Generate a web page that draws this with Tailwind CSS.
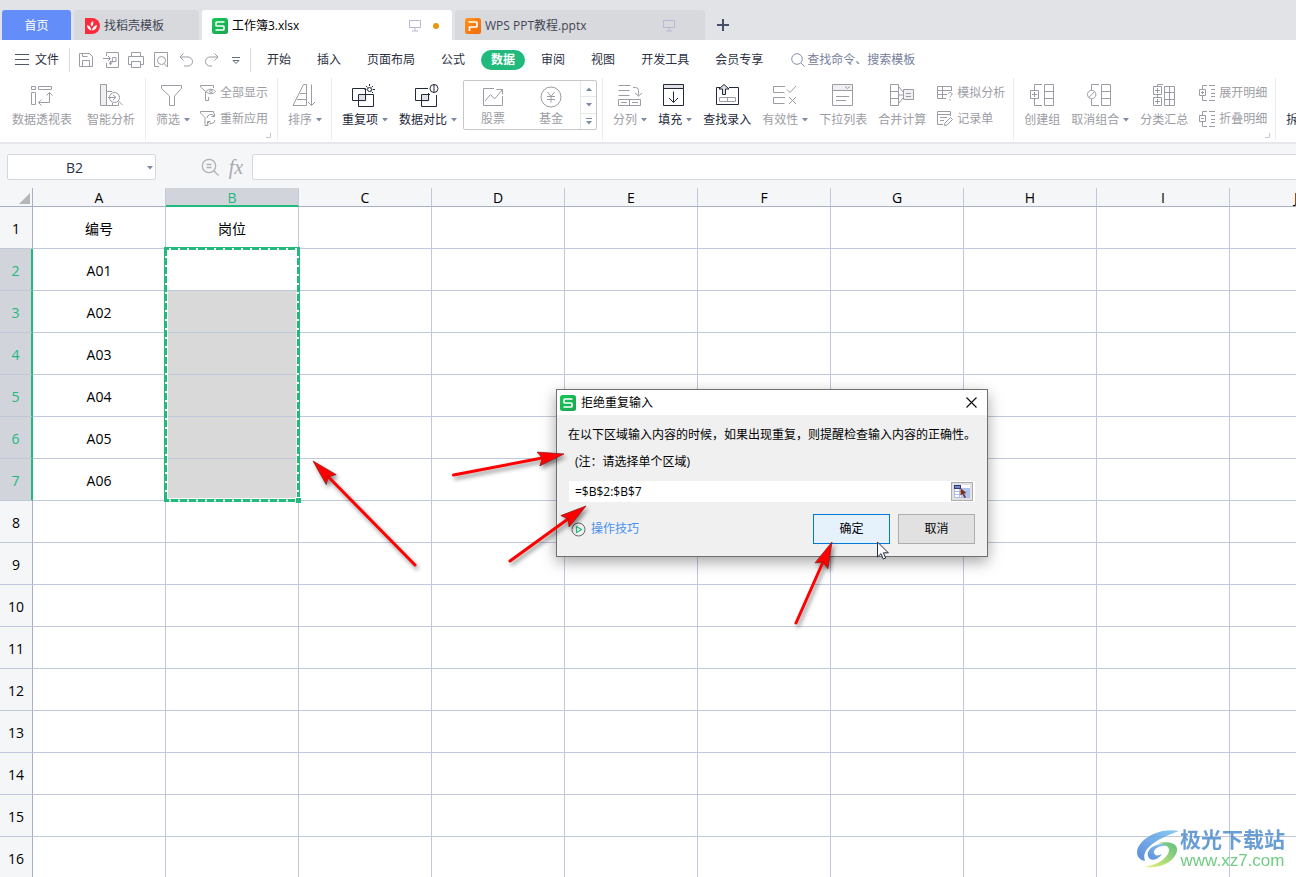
<!DOCTYPE html>
<html lang="zh-CN">
<head>
<meta charset="utf-8">
<title>工作簿3.xlsx</title>
<script src="https://cdn.jsdelivr.net/npm/@tailwindcss/browser@4"></script>
</head>
<body class="relative flex h-screen flex-col overflow-hidden bg-white font-['Open_Sans','Noto_Sans_CJK_SC',sans-serif] text-xs text-[#2b3042]">

<svg class="absolute size-0" aria-hidden="true">
  <defs>
    <linearGradient id="gGreen" x1="0" y1="0" x2="1" y2="1"><stop offset="0" stop-color="#12c957"/><stop offset="1" stop-color="#1da552"/></linearGradient>
    <linearGradient id="gOrange" x1="0" y1="0" x2="1" y2="1"><stop offset="0" stop-color="#ff9318"/><stop offset="1" stop-color="#ee6a0c"/></linearGradient>
    <symbol id="sheetLogo" viewBox="0 0 16 16"><rect width="16" height="16" rx="2.5" fill="url(#gGreen)"/><path d="M12.500 4H5a1 1 0 0 0-1 1v2a1 1 0 0 0 1 1h6a1 1 0 0 1 1 1v2a1 1 0 0 1-1 1H3.500" fill="none" stroke="#fff" stroke-width="1.700"/></symbol>
    <symbol id="pptLogo" viewBox="0 0 16 16"><rect width="16" height="16" rx="2.5" fill="url(#gOrange)"/><path d="M3.500 4H11a1 1 0 0 1 1 1v3a1 1 0 0 1-1 1H4.500v4" fill="none" stroke="#fff" stroke-width="1.700"/></symbol>
    <symbol id="screen" viewBox="0 0 12 12"><path d="M.5.5h11v7H.5zM6 8v3M3 11h6" fill="none" stroke="#b6b9d2"/></symbol>
    <symbol id="caret" viewBox="0 0 6 4"><path d="M0 0h6L3 3.500z" fill="#7f8aa5"/></symbol>
  </defs>
</svg>

<header class="flex h-10 shrink-0 items-end bg-[#e1e3e7] pl-[2px]">
  <button class="h-[30px] w-[69px] rounded-t-[3px] bg-[#638efa] pt-[2px] text-white">首页</button>
  <button class="ml-[3px] flex h-[30px] w-[125px] items-center gap-[4px] rounded-t-[3px] bg-[#d8d9dd] pt-[2px] pl-[10px] text-[#404654]">
    <svg class="size-4" viewBox="0 0 16 16"><path d="M1 0h7a8 8 0 0 1 0 16H1z" fill="#fb2b3c"/><path d="M7.500 12.500C4.500 12 3 10 3 7c2.500.5 4 2.500 4.500 5.500zM7.500 8.500C6 6.500 6.500 4.500 9 3c.8 2.500.3 4.500-1.500 5.500zM8 12.500c.3-3 2-4.800 5-5.500 0 3-1.800 5.200-5 5.500z" fill="#fff"/></svg>
    <span>找稻壳模板</span>
  </button>
  <button class="ml-[3px] flex h-[30px] w-[250px] items-center rounded-t-[3px] bg-white px-[10px] pt-[2px] text-black">
    <svg class="size-4"><use href="#sheetLogo"/></svg>
    <span class="ml-[4px] flex-1 text-left">工作簿3.xlsx</span>
    <svg class="size-3"><use href="#screen"/></svg>
    <span class="mr-[3px] ml-[12px] size-[6px] rounded-full bg-[#e5980d]"></span>
  </button>
  <button class="ml-[3px] flex h-[30px] w-[250px] items-center rounded-t-[3px] bg-[#d8d9dd] px-[10px] pt-[2px] text-[#404654]">
    <svg class="size-4"><use href="#pptLogo"/></svg>
    <span class="ml-[4px] flex-1 text-left">WPS PPT教程.pptx</span>
    <svg class="mr-[20px] size-3"><use href="#screen"/></svg>
  </button>
  <button class="flex h-[30px] w-9 items-center justify-center" aria-label="新建"><svg class="size-3" viewBox="0 0 12 12"><path d="M6 0v12M0 6h12" stroke="#44506b" stroke-width="2"/></svg></button>
</header>

<nav class="flex h-[38px] shrink-0 items-center pt-[2px] pl-[15px]">
  <button class="flex items-center gap-[6px]"><svg class="h-3 w-[14px]" viewBox="0 0 14 12"><path d="M0 .5h14M0 5.500h14M0 10.500h14" stroke="#50566a"/></svg><span class="text-[#2b3042]">文件</span></button>
  <div class="ml-[10px] h-6 w-px bg-[#dcdce0]"></div>
  <div class="flex items-center gap-[9px] pl-[8px] [&_svg]:size-4 [&_svg]:fill-none [&_svg]:stroke-[#9a9da3]">
    <button aria-label="保存"><svg viewBox="0 0 16 16"><path d="M1.500 1.500h10l3 3v10h-13zM4.500 14V8.500h7V14M4.500 1.500v3h5"/></svg></button>
    <button aria-label="输出为PDF"><svg viewBox="0 0 16 16"><path d="M3.500 4V.5h12v15h-12V11M0 6.500h7M5 4l2.500 2.500L5 9M7.500 12.500V9M9.500 5.500h3.500v4h-4c-3 0-3 3-1.500 3s2-4 2-7"/></svg></button>
    <button aria-label="打印"><svg viewBox="0 0 16 16"><path d="M3.500 4.500v-4h9v4M3.500 12.500h-3v-8h15v8h-3M3.500 9.500h9v6h-9z"/></svg></button>
    <button aria-label="打印预览"><svg viewBox="0 0 16 16"><path d="M6 14.500H1.500V.5h13V15M11.500 12l3 3"/><circle cx="8.500" cy="8.500" r="4"/></svg></button>
    <button aria-label="撤消"><svg viewBox="0 0 16 16"><path d="M5.500 1.500 2 5l3.500 3.500M2 5h8a4.500 4.500 0 0 1 0 9H6"/></svg></button>
    <button aria-label="恢复"><svg viewBox="0 0 16 16"><path d="m11.500 1.500 3.500 3.500-3.500 3.500M15 5H7a4.500 4.500 0 0 0 0 9h2"/></svg></button>
    <button aria-label="更多"><svg viewBox="0 0 16 16"><path d="M4 5.500h8M5 8.500h6l-3 3z" stroke="#666c7c"/></svg></button>
  </div>
  <div class="ml-[6px] h-6 w-px bg-[#dcdce0]"></div>
  <div class="ml-[3px] flex items-center [&>button]:px-[13px]">
    <button>开始</button><button>插入</button><button>页面布局</button><button>公式</button>
    <button><span class="-mx-[10px] block h-5 rounded-full bg-[#21ba7c] px-[10px] leading-5 font-semibold text-white">数据</span></button>
    <button>审阅</button><button>视图</button><button>开发工具</button><button>会员专享</button>
  </div>
  <label class="ml-[15px] flex flex-1 items-center gap-[2px]">
    <svg class="size-[14px] shrink-0" viewBox="0 0 14 14" fill="none" stroke="#8790ad"><circle cx="6" cy="6" r="5.300"/><path d="m10 10 3.500 3.500"/></svg>
    <input class="w-40 outline-none placeholder:text-[#77809c]" placeholder="查找命令、搜索模板" aria-label="查找命令">
  </label>
</nav>

<section class="flex h-[64px] shrink-0 overflow-hidden whitespace-nowrap text-[#9c9da4] [&_button]:shrink-0 [&_svg]:fill-none [&_svg]:stroke-current">
  <div class="flex shrink-0 gap-[15px] pr-[10px] pl-[12px]">
    <button class="flex flex-col items-center gap-[4px] pt-[6px]"><svg class="size-6" viewBox="0 0 24 24"><path d="M1.500 2.500h4v3h-4zM8.500 2.500h13v3h-13zM1.500 8.500h4v12h-4zM8.500 18.500h11v-10M11.500 15.500l-3 3 3 3M16.500 11.500l3-3 3 3"/></svg><span class="leading-4">数据透视表</span></button>
    <button class="flex flex-col items-center gap-[4px] pt-[6px]"><svg class="size-6" viewBox="0 0 24 24"><path d="M1.500.5h6v21h-6z" fill="#f0f0f2"/><path d="M7.500 7.500H13M7.500 21.500h12v-3M13.500 21.500V19M9 13.500h7M14 11l3 2.500-3 2.500M19.500 17l4 4"/><circle cx="15.500" cy="13.500" r="5"/></svg><span class="leading-4">智能分析</span></button>
  </div>
  <div class="h-[62px] w-px shrink-0 bg-[#ececee]"></div>
  <div class="relative flex shrink-0 gap-[10px] pr-[9px] pl-[10px]">
    <button class="flex flex-col items-center gap-[4px] pt-[6px]"><svg class="mr-[2px] size-6" viewBox="0 0 24 24"><path d="M1.500 1.500h20v3l-7 7.500v9.500h-5V12l-8-7.500z"/></svg><span class="flex items-center gap-[4px] leading-4">筛选<svg class="h-1 w-[6px] stroke-none!"><use href="#caret"/></svg></span></button>
    <div class="flex flex-col gap-[10px] pt-[7px]">
      <button class="flex items-center gap-[4px] leading-4"><svg class="size-4" viewBox="0 0 16 16"><path d="M5.500 15.500h3V12M5.500 15.500V6.500L.5 2V.5h13V3"/><path d="M6 6.500c2.500-3 7-3 9.500 0-2.500 3-7 3-9.500 0z"/><circle cx="10.800" cy="6.500" r="1.300"/></svg>全部显示</button>
      <button class="flex items-center gap-[4px] leading-4"><svg class="size-4" viewBox="0 0 16 16"><path d="M13.500 2.500v-2H.5V2L5 6.500v8h3V13M7 7a4 4 0 0 1 7.500-1.500M14.500 2.500v3h-3M15 9a4 4 0 0 1-7.500 1.500M7.500 13.500v-3h3"/></svg>重新应用</button>
    </div>
    <svg class="absolute right-[6px] bottom-1 size-[5px]" viewBox="0 0 5 5"><path d="M4.500 0v4.500H0" stroke="#c4c8d4"/></svg>
  </div>
  <div class="h-[62px] w-px shrink-0 bg-[#ececee]"></div>
  <div class="flex shrink-0 pr-[9px] pl-[10px]">
    <button class="flex flex-col items-center gap-[4px] pt-[6px]"><svg class="mr-[2px] size-6" viewBox="0 0 24 24"><path d="M1 21.500h13.500V.5H11.500zM8 9.500h6M5 15.500h9.500M19.500.5v21M16 18l3.500 3.500L23 18"/></svg><span class="flex items-center gap-[4px] leading-4">排序<svg class="h-1 w-[6px] stroke-none!"><use href="#caret"/></svg></span></button>
  </div>
  <div class="h-[62px] w-px shrink-0 bg-[#ececee]"></div>
  <div class="flex shrink-0 gap-[11px] pr-[5px] pl-[10px]">
    <button class="flex flex-col items-center gap-[4px] pt-[6px] text-[#23283a]"><svg class="mr-[2px] size-6" viewBox="0 0 24 24"><path d="M6.500 10.500h8v7h-8z" fill="#dfe1e6" stroke="none"/><path d="M.5 4.500h13v12H.5zM6.500 10.500h15v12h-15z"/><circle cx="17.500" cy="5.500" r="2"/><path d="M17.500 0v2M12.500 5.500h2M20.500 5.500H23M14 2l1.500 1.500M21 2l-1.500 1.500M19.500 7.500 21 9"/></svg><span class="flex items-center gap-[4px] leading-4">重复项<svg class="h-1 w-[6px] stroke-none!"><use href="#caret"/></svg></span></button>
    <button class="flex flex-col items-center gap-[4px] pt-[6px] text-[#23283a]"><svg class="mr-[2px] size-6" viewBox="0 0 24 24"><path d="M6.500 10.500h8v7h-8z" fill="#dfe1e6" stroke="none"/><path d="M13 4.500H.5v12h13V9M15 10.500H6.500v12h15V11"/><circle cx="19" cy="4.500" r="4"/><path d="M19 .5v8"/></svg><span class="flex items-center gap-[4px] leading-4">数据对比<svg class="h-1 w-[6px] stroke-none!"><use href="#caret"/></svg></span></button>
    <div class="mt-[2px] -ml-[5px] flex h-[50px] w-[134px] rounded-[2px] border border-[#c6c7cb]">
      <button class="flex w-[58px] flex-col items-center gap-[2px] pt-[4px]"><svg class="size-6" viewBox="0 0 24 24"><path d="M13 3.500H2.500v17h19V11M4 16l5.500-6.500 4 4.500 8-9.500M15.500 4.500h6v5"/></svg><span class="leading-4">股票</span></button>
      <button class="flex w-[58px] flex-col items-center gap-[2px] pt-[4px]"><svg class="size-6" viewBox="0 0 24 24"><circle cx="12" cy="12" r="10"/><path d="m8.500 7 3.500 4.500L15.500 7M12 11.500v6M8 11.500h8M8 14.500h8"/></svg><span class="leading-4">基金</span></button>
      <div class="flex flex-1 flex-col divide-y divide-[#e6e7ea] border-l border-[#e6e7ea] [&>button]:flex [&>button]:flex-1 [&>button]:items-center [&>button]:justify-center">
        <button aria-label="上一行"><svg class="h-1 w-[6px] rotate-180 stroke-none!"><use href="#caret"/></svg></button>
        <button aria-label="下一行"><svg class="h-1 w-[6px] stroke-none!"><use href="#caret"/></svg></button>
        <button aria-label="更多"><svg class="h-[7px] w-[6px] stroke-none!" viewBox="0 0 6 7"><path d="M0 0h6v1H0zM0 3h6L3 6.500z" fill="#7f8aa5"/></svg></button>
      </div>
    </div>
  </div>
  <div class="h-[62px] w-px shrink-0 bg-[#ececee]"></div>
  <div class="flex shrink-0 gap-[11px] pr-[8px] pl-[10px]">
    <button class="flex flex-col items-center gap-[4px] pt-[6px]"><svg class="size-6" viewBox="0 0 24 24"><path d="M.5 1.500h12M.5 6.500h11M.5 11.500h11M.5 15.500h22v6H.5zM11.500 15.500v6M3 18.500h6M14 18.500h6M15 3.500h2.500a3 3 0 0 1 3 3v5M17 9l3.500 3L24 9"/></svg><span class="flex items-center gap-[4px] leading-4">分列<svg class="h-1 w-[6px] stroke-none!"><use href="#caret"/></svg></span></button>
    <button class="flex flex-col items-center gap-[4px] pt-[6px] text-[#23283a]"><svg class="mr-[2px] size-6" viewBox="0 0 24 24"><path d="M1.500.5h20v4h-20z" fill="#dfe1e6"/><path d="M1.500 4.500h20v17h-20zM11.500 7.500v11M7 14l4.500 4.500L16 14"/></svg><span class="flex items-center gap-[4px] leading-4">填充<svg class="h-1 w-[6px] stroke-none!"><use href="#caret"/></svg></span></button>
    <button class="flex flex-col items-center gap-[4px] pt-[6px] text-[#23283a]"><svg class="size-6" viewBox="0 0 24 24"><path d="M5 3.500H1.500v17h22v-17H14"/><path d="M4.500 13.500h16v4h-16zM12.500 13.500v4" stroke="#9c9da4"/><path d="M7.500 10.500V5H4L9 .5 14 5h-3.500v5.500z" fill="#dfe1e6"/></svg><span class="leading-4">查找录入</span></button>
    <button class="flex flex-col items-center gap-[4px] pt-[6px]"><svg class="mr-[2px] size-6" viewBox="0 0 24 24"><path d="M13 2.500H1.500v6h11M13 13.500H1.500v6h11M15 5.500l3 3 6-6.500M17 13l7 7M24 13l-7 7"/></svg><span class="flex items-center gap-[4px] leading-4">有效性<svg class="h-1 w-[6px] stroke-none!"><use href="#caret"/></svg></span></button>
    <button class="flex flex-col items-center gap-[4px] pt-[6px]"><svg class="size-6" viewBox="0 0 24 24"><path d="M1.500.5h20v6h-20z" fill="#f0f0f2"/><path d="M1.500 6.500h20v15h-20zM14 2.500l2.500 2 2.500-2M5 12.500h13M5 16.500h10"/></svg><span class="leading-4">下拉列表</span></button>
    <button class="flex flex-col items-center gap-[4px] pt-[6px]"><svg class="size-6" viewBox="0 0 24 24"><path d="M.5.5h8v21h-8zM.5 7.500h8M.5 14.500h8M9 3l4 5M9 11h4M9 19l4-5"/><path d="M13.500 5.500h10v10h-10z" fill="#f0f0f2"/><path d="M16 9.500h5M16 12.500h5"/></svg><span class="leading-4">合并计算</span></button>
    <div class="flex flex-col gap-[10px] pt-[7px]">
      <button class="flex items-center gap-[4px] leading-4"><svg class="size-4" viewBox="0 0 16 16"><path d="M9 13.500H.5v-12h14V6M.5 5.500h14M.5 9.500H10M5.500 1.500v12M11.500 9c0-2 3.500-2 3.500 0s-2 1.500-2 3.500M13 14v1.500"/></svg>模拟分析</button>
      <button class="flex items-center gap-[4px] leading-4"><svg class="size-4" viewBox="0 0 16 16"><path d="M6 13.500H.5v-13h13V5M.5 3.500h13M3 6.500h7M3 9.500h4M8 12l5.500-5.500 2 2L10 14l-2.500.5z"/></svg>记录单</button>
    </div>
  </div>
  <div class="h-[62px] w-px shrink-0 bg-[#ececee]"></div>
  <div class="relative flex shrink-0 gap-[11px] pr-[8px] pl-[10px]">
    <button class="flex flex-col items-center gap-[4px] pt-[6px]"><svg class="size-6" viewBox="0 0 24 24"><path d="M12 .5H4.500V6M4.500 15v6.500H12M.5 6.500h8v8h-8zM2 10.500h5M4.500 8v5M14.500.5h9v21h-9zM14.500 7.500h9M14.500 14.500h9"/></svg><span class="leading-4">创建组</span></button>
    <button class="flex flex-col items-center gap-[4px] pt-[6px]"><svg class="mr-[2px] size-6" viewBox="0 0 24 24"><path d="M12 .5H4.500V6M4.500 15v6.500H12M2 13.500l5.500-6M14.500.5h9v21h-9zM14.500 7.500h9M14.500 14.500h9"/><circle cx="4.700" cy="10.500" r="4.200"/></svg><span class="flex items-center gap-[4px] leading-4">取消组合<svg class="h-1 w-[6px] stroke-none!"><use href="#caret"/></svg></span></button>
    <button class="flex flex-col items-center gap-[4px] pt-[6px]"><svg class="size-6" viewBox="0 0 24 24"><path d="M11 .5H5.500v2M1.500 2.500h8v8h-8zM1.500 13.500h8v8h-8zM3 6.500h5M5.500 4v5M3 17.500h5M5.500 15v5M5.500 10.500v3M12.500 2.500h10v19h-10zM17.500 2.500v19M12.500 8.500h10M12.500 15.500h10"/></svg><span class="leading-4">分类汇总</span></button>
    <div class="flex flex-col gap-[10px] pt-[7px]">
      <button class="flex items-center gap-[4px] leading-4"><svg class="size-4" viewBox="0 0 16 16"><path d="M8 .5H3.500v4M3.500 11v4.500H8M.5 4.500h6v6h-6zM2 7.500h3M3.500 6v3M10 .5h6M12 4.500h4M12 8.500h4M12 11.500h4M10 15.500h6"/></svg>展开明细</button>
      <button class="flex items-center gap-[4px] leading-4"><svg class="size-4" viewBox="0 0 16 16"><path d="M8 .5H3.500v4M3.500 11v4.500H8M.5 4.500h6v6h-6zM2 7.500h3M10 .5h6M12 4.500h4M12 8.500h4M12 11.500h4M10 15.500h6"/></svg>折叠明细</button>
    </div>
    <svg class="absolute right-[5px] bottom-1 size-[5px]" viewBox="0 0 5 5"><path d="M4.500 0v4.500H0" stroke="#c4c8d4"/></svg>
  </div>
  <div class="h-[62px] w-px shrink-0 bg-[#ececee]"></div>
  <button class="flex flex-col items-center gap-[4px] pt-[6px] pl-[10px] text-[#23283a]"><span class="size-6"></span><span class="leading-4">拆分表格</span></button>
</section>

<section class="flex h-[46px] shrink-0 items-center overflow-hidden border-t-2 border-[#e6e7ea] bg-[#f5f6f8] pt-[2px] pl-[7px]">
  <div class="relative">
    <input class="h-[26px] w-[149px] rounded-[2px] border border-[#d6d7db] bg-white pr-[14px] text-center text-sm text-[#2b3042]" value="B2" aria-label="名称框">
    <svg class="absolute top-[12px] right-[3px] h-1 w-[6px]"><use href="#caret"/></svg>
  </div>
  <button class="ml-[45px]" aria-label="缩小"><svg class="size-[18px]" viewBox="0 0 18 18" fill="none" stroke="#b0b1b5" stroke-width="1.300"><circle cx="8" cy="8" r="6.700"/><path d="M13 13l4.500 4.500M5.500 6.500h5M5.500 9.500h5"/></svg></button>
  <button class="ml-[9px] w-4 font-['Liberation_Serif',serif] text-xl leading-6 text-[#a8a9ae] italic" aria-label="插入函数">fx</button>
  <input class="-mr-1 ml-[8px] h-[26px] flex-1 rounded-[2px] border border-[#d6d7db] bg-white px-2 text-sm" aria-label="编辑栏">
</section>

<main class="relative min-h-0 flex-1 overflow-hidden">
  <table class="w-[1363px] table-fixed border-separate border-spacing-0 text-center text-sm text-black [&_td]:border-r [&_td]:border-b [&_td]:border-[#c2c8dc] [&_td]:p-0 [&_td]:pt-[2px] [&_th]:p-0 [&_th]:pt-[2px] [&_th]:font-normal">
    <thead><tr id="cols" class="h-[19px] bg-[#f5f6f8] leading-[14px]"></tr></thead>
    <tbody id="rows"></tbody>
  </table>
  <svg class="absolute top-[59px] left-[164px] h-[256px] w-[137px]" viewBox="0 0 137 256" fill="none">
    <path d="M3.500 44.500V251.500H133V44.500" stroke="#fff"/>
    <rect x="1.500" y="1.500" width="133" height="252" stroke="#21ba7c" stroke-width="3"/>
    <path d="M5 2h128" stroke="#fff" stroke-width="2" stroke-dasharray="2 7"/>
    <path d="M5 253.500h126" stroke="#fff" stroke-width="2" stroke-dasharray="2 7"/>
    <path d="M2 9v242M134 9v240" stroke="#fff" stroke-width="2" stroke-dasharray="2 7"/>
    <path d="M131.500 250.500h5v5h-5z" fill="#21ba7c" stroke="#fff"/>
    <path d="M132 251h5v5h-5z" fill="#21ba7c"/>
  </svg>
</main>

<div role="dialog" aria-labelledby="dlgTitle" class="absolute top-[389px] left-[556px] w-[432px] border border-[#707070] bg-[#f0f0f0] text-black shadow-[0_5px_14px_rgba(0,0,0,0.35)]">
  <div class="flex h-[25px] items-center bg-white pr-[10px] pl-[3px]">
    <svg class="size-4"><use href="#sheetLogo"/></svg>
    <h2 id="dlgTitle" class="ml-[5px] flex-1">拒绝重复输入</h2>
    <button aria-label="关闭"><svg class="size-[11px]" viewBox="0 0 11 11"><path d="m.5.5 10 10M10.500.5l-10 10" stroke="#111" stroke-width="1.200"/></svg></button>
  </div>
  <div class="px-[12px] pt-[10px] pb-[12px]">
    <p class="-mx-px leading-5 whitespace-nowrap">在以下区域输入内容的时候，如果出现重复，则提醒检查输入内容的正确性。</p>
    <label for="range" class="mt-[7px] block pl-[6px] leading-5">(注：请选择单个区域)</label>
    <div class="mt-[9px] flex h-[21px] items-center bg-white pr-[2px]">
      <input id="range" class="min-w-0 flex-1 bg-transparent pl-[6px] outline-none" value="=$B$2:$B$7">
      <button class="flex h-[19px] w-[22px] items-center justify-center border border-[#adadad] bg-[#e1e1e1]" aria-label="选择区域"><svg class="h-[13px] w-4" viewBox="0 0 16 13"><path fill="#fff" d="M0 0h16v13H0z"/><path fill="#aec6f2" d="M7 4h9v9H7z"/><path d="M.5 3.500h15v9H.5zM0 6.500h15M0 9.500h15M5.500 3v10" stroke="#a9c0ec" fill="none"/><path fill="#2c3a86" d="M0 0h7v4H0z"/><path fill="#c9d7f4" d="M1 1.500h5v1H1z"/><path d="M6.500 3l6 5-2.500.5 2 4-1.500.5-2-4-2 1.500z" fill="#7c3022"/></svg></button>
    </div>
    <div class="mt-[12px] flex h-[30px] items-center gap-2">
      <a href="#" class="mr-auto ml-[2px] flex items-center gap-[5px] text-[#4a90ee]"><svg class="size-[15px]" viewBox="0 0 15 15" fill="none"><circle cx="7.500" cy="7.500" r="6.500" stroke="#666"/><path d="M5.500 4.500v6l5-3z" stroke="#21ba7c" stroke-width="1.200"/></svg>操作技巧</a>
      <button class="h-[30px] w-[77px] border border-[#0078d7] bg-[#e5f1fb]">确定</button>
      <button class="h-[30px] w-[77px] border border-[#adadad] bg-[#e1e1e1]">取消</button>
    </div>
  </div>
</div>

<svg class="pointer-events-none absolute top-0 left-0 h-[877px] w-[1296px] drop-shadow-[2px_3px_2px_rgba(0,0,0,0.45)]" viewBox="0 0 1296 877">
  <defs><path id="head" d="M0 0-26-7-22 0-26 7z" fill="#f00" stroke="#8c1a1a" stroke-width=".7"/></defs>
  <g stroke="#f00" stroke-width="3" stroke-linecap="round"><path d="M415 565 328 476.500M453.500 475 542 458M510 561 568 519M796 623 823 562"/></g>
  <use href="#head" transform="translate(313 461) rotate(-134.500)"/>
  <use href="#head" transform="translate(564 454) rotate(-11)"/>
  <use href="#head" transform="translate(586 506) rotate(-36)"/>
  <use href="#head" transform="translate(832 542) rotate(-66)"/>
</svg>
<svg class="pointer-events-none absolute top-[541px] left-[877px] h-[19px] w-3" viewBox="0 0 12 19"><path d="M.5 1v15l3.500-3.300L6.300 18l2.400-1-2.300-5.200h4.900z" fill="#fff" stroke="#222b45"/></svg>

<div class="pointer-events-none absolute right-[11px] bottom-[6px] flex items-center opacity-80">
  <svg class="h-[42px] w-[44px]" viewBox="0 0 44 42">
    <defs><linearGradient id="wb" x1="0" y1="1" x2="1" y2="0"><stop offset="0" stop-color="#3672d0"/><stop offset="1" stop-color="#6fbef0"/></linearGradient><linearGradient id="wg" x1="0" y1="1" x2="1" y2="0"><stop offset="0" stop-color="#e3ee5a"/><stop offset="1" stop-color="#35b05e"/></linearGradient></defs>
    <path d="M43 3C22-1 2 12 1 24c0 5 3 8 8 9-3-9 3-19 34-30z" fill="url(#wb)"/>
    <path d="M14 31c-6-6 1-14 11-15 4 0 6 0 8 2-9-1-16 3-15 7 1 3 4 3 8 1-3 5-9 7-12 5z" fill="url(#wb)"/>
    <path d="M22 15c11-2 20 0 19 8-2 10-15 18-33 16 13-2 23-8 25-16 1-4-4-7-11-8z" fill="url(#wg)"/>
  </svg>
  <div class="text-center whitespace-nowrap">
    <p class="text-[21px] leading-6 font-bold text-[#4387cb]">极光下载站</p>
    <p class="font-['Liberation_Sans',sans-serif] text-[17px] leading-5 font-medium text-[#4cc064]">www.xz7.com</p>
  </div>
</div>

<script>
  const letters = ['A','B','C','D','E','F','G','H','I','J'];
  const colHead = 'border-b border-[#a9afc9] border-r border-r-[#c2c8dc]';
  const colHeadOn = 'border-b-2 border-[#21ba7c] border-r border-r-[#c2c8dc] bg-[#d1d4db] text-[#21ba7c]';
  document.getElementById('cols').innerHTML =
    '<th class="w-[33px] border-r border-b border-[#a9afc9]"><svg class="ml-[19px] size-[11px]" viewBox="0 0 11 11"><path d="M11 0v11H0z" fill="#b5b6ba"/></svg></th>' +
    letters.map(l => `<th scope="col" class="${l === 'B' ? colHeadOn : colHead}">${l}</th>`).join('');
  const colA = ['编号','A01','A02','A03','A04','A05','A06'];
  let html = '';
  for (let r = 1; r <= 16; r++) {
    const on = r >= 2 && r <= 7;
    html += '<tr class="h-[42px]">';
    html += `<th scope="row" class="${on ? 'border-r-2 border-r-[#21ba7c] border-b border-b-[#c2c8dc] bg-[#d1d4db] text-[#21ba7c]' : 'border-r border-r-[#a9afc9] border-b border-b-[#c2c8dc] bg-[#f5f6f8]'}">${r}</th>`;
    letters.forEach((l, i) => {
      const t = i === 0 ? (colA[r - 1] || '') : (i === 1 && r === 1 ? '岗位' : '');
      html += `<td class="${i === 1 && r >= 3 && r <= 7 ? 'bg-[#d9d9d9]' : ''}">${t}</td>`;
    });
    html += '</tr>';
  }
  document.getElementById('rows').innerHTML = html;
</script>
</body>
</html>
